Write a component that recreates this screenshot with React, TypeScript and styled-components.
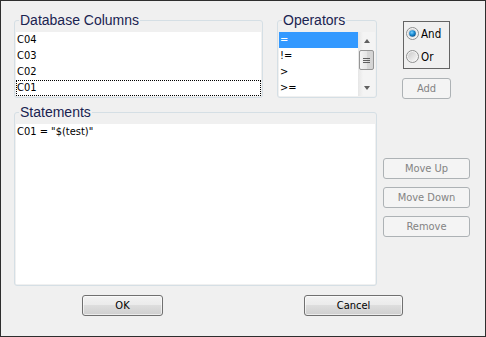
import styled, { createGlobalStyle } from "styled-components";

const GlobalStyle = createGlobalStyle`
  html, body {
    margin: 0;
    padding: 0;
    background: #f0f0f0;
  }
  #root {
    width: 486px;
    height: 337px;
  }
`;

const Window = styled.div`
  box-sizing: border-box;
  width: 486px;
  height: 337px;
  border: 1px solid #2e2e2e;
  background: #f0f0f0;
  padding: 11px 0 0 13px;
  display: flex;
  flex-direction: column;
  font-family: "DejaVu Sans Condensed", "Liberation Sans", sans-serif;
  font-size: 11px;
  color: #000;
`;

const TopArea = styled.div`
  display: flex;
  gap: 6px;
`;

const MainColumn = styled.div`
  width: 363px;
  display: flex;
  flex-direction: column;
`;

const TopRow = styled.div`
  display: flex;
  gap: 14px;
`;

const GroupBox = styled.fieldset<{ $width: number }>`
  box-sizing: border-box;
  width: ${(p) => p.$width}px;
  margin: 0;
  padding: 4px 1px 1px 1px;
  border: 1px solid #d5dfe5;
  border-radius: 3px;
  min-width: 0;
  display: flex;
`;

const GroupTitle = styled.legend`
  font-family: "Liberation Sans", Arial, sans-serif;
  font-size: 14px;
  line-height: 16px;
  color: #1a2350;
  margin-left: 3px;
  padding: 0 1px;
`;

const ListBox = styled.div<{ $height: number }>`
  flex: 1;
  height: ${(p) => p.$height}px;
  background: #ffffff;
  overflow: hidden;
`;

const ListRow = styled.div<{ $selected?: boolean; $focused?: boolean }>`
  box-sizing: border-box;
  height: 16px;
  line-height: 16px;
  padding-left: 1px;
  white-space: pre;
  background: ${(p) => (p.$selected ? "#3399ff" : "transparent")};
  color: ${(p) => (p.$selected ? "#ffffff" : "#000000")};
  outline: ${(p) => (p.$focused ? "1px dotted #000" : "none")};
  outline-offset: -1px;
`;

const ScrollBar = styled.div`
  width: 17px;
  height: 64px;
  background: linear-gradient(to right, #e6e6e6, #f4f4f4 30%, #f4f4f4);
  display: flex;
  flex-direction: column;
  align-items: center;
`;

const Arrow = styled.div<{ $down?: boolean }>`
  height: 17px;
  width: 17px;
  display: flex;
  align-items: center;
  justify-content: center;

  &::before {
    content: "";
    width: 0;
    height: 0;
    border-left: 3.5px solid transparent;
    border-right: 3.5px solid transparent;
    ${(p) =>
      p.$down
        ? "border-top: 4px solid #606060;"
        : "border-bottom: 4px solid #606060;"}
  }
`;

const Thumb = styled.div`
  box-sizing: border-box;
  margin-top: 1px;
  width: 15px;
  height: 20px;
  border: 1px solid #959595;
  border-radius: 2px;
  background: linear-gradient(to right, #f4f4f4, #e6e6e6 50%, #d8d8d8 51%, #d4d4d4);
  display: flex;
  align-items: center;
  justify-content: center;
`;

const Grip = styled.div`
  width: 7px;
  height: 5px;
  background: repeating-linear-gradient(
    to bottom,
    #5f5f5f 0 1px,
    transparent 1px 2px
  );
`;

const ScrollSpacer = styled.div`
  flex: 1;
`;

const StatementsBox = styled(GroupBox)`
  margin-top: 6px;
`;

const SideColumn = styled.div`
  width: 87px;
  display: flex;
  flex-direction: column;
  align-items: center;
`;

const RadioBox = styled.div`
  box-sizing: border-box;
  margin-top: 9px;
  width: 47px;
  height: 48px;
  border: 1px solid #646464;
  display: flex;
  flex-direction: column;
`;

const RadioRow = styled.label`
  height: 23px;
  display: flex;
  align-items: center;
  gap: 2px;
  padding-left: 2px;
  font-size: 11.5px;
`;

const Button = styled.button<{ $width: number }>`
  box-sizing: border-box;
  width: ${(p) => p.$width}px;
  height: 21px;
  padding: 0;
  border: 1px solid #707070;
  border-radius: 3px;
  background: linear-gradient(
    to bottom,
    #f2f2f2 0%,
    #ebebeb 45%,
    #dddddd 50%,
    #cfcfcf 100%
  );
  box-shadow: inset 0 0 0 1px rgba(255, 255, 255, 0.6);
  font-family: "DejaVu Sans Condensed", "Liberation Sans", sans-serif;
  font-size: 11px;
  color: #000;

  &:disabled {
    border-color: #adb2b5;
    background: #f4f4f4;
    box-shadow: none;
    color: #838383;
  }
`;

const AddButton = styled(Button)`
  margin-top: 9px;
`;

const MoveButtons = styled.div`
  margin-top: 59px;
  display: flex;
  flex-direction: column;
  gap: 8px;
`;

const ButtonRow = styled.div`
  margin-top: 9px;
  padding-left: 68px;
  display: flex;
  gap: 141px;
`;

const Radio = ({ checked, id }: { checked?: boolean; id: string }) => (
  <svg width="13" height="13" viewBox="0 0 13 13">
    <defs>
      <linearGradient id={`${id}-bg`} x1="0" y1="0" x2="1" y2="1">
        <stop offset="0" stopColor="#cbcbcb" />
        <stop offset="1" stopColor="#f7f7f7" />
      </linearGradient>
      <radialGradient id={`${id}-dot`} cx="0.4" cy="0.35" r="0.7">
        <stop offset="0" stopColor="#7fd0ff" />
        <stop offset="0.5" stopColor="#1c8fd6" />
        <stop offset="1" stopColor="#0a4d86" />
      </radialGradient>
    </defs>
    <circle cx="6.5" cy="6.5" r="6" fill="#f4f4f4" stroke="#8e8f8f" />
    <circle cx="6.5" cy="6.5" r="4.5" fill={`url(#${id}-bg)`} />
    {checked && <circle cx="6.5" cy="6.5" r="3.3" fill={`url(#${id}-dot)`} />}
  </svg>
);

const columns = ["C04", "C03", "C02", "C01"];
const operators = ["=", "!=", ">", ">="];

export default function App() {
  return (
    <>
      <GlobalStyle />
      <Window>
        <TopArea>
          <MainColumn>
            <TopRow>
              <GroupBox $width={249}>
                <GroupTitle>Database Columns</GroupTitle>
                <ListBox $height={64}>
                  {columns.map((c, i) => (
                    <ListRow key={c} $focused={i === columns.length - 1}>
                      {c}
                    </ListRow>
                  ))}
                </ListBox>
              </GroupBox>
              <GroupBox $width={100}>
                <GroupTitle>Operators</GroupTitle>
                <ListBox $height={64}>
                  {operators.map((o, i) => (
                    <ListRow key={o} $selected={i === 0}>
                      {o}
                    </ListRow>
                  ))}
                </ListBox>
                <ScrollBar>
                  <Arrow />
                  <Thumb>
                    <Grip />
                  </Thumb>
                  <ScrollSpacer />
                  <Arrow $down />
                </ScrollBar>
              </GroupBox>
            </TopRow>
            <StatementsBox $width={363}>
              <GroupTitle>Statements</GroupTitle>
              <ListBox $height={160}>
                <ListRow>C01 = "$(test)"</ListRow>
              </ListBox>
            </StatementsBox>
          </MainColumn>
          <SideColumn>
            <RadioBox>
              <RadioRow>
                <Radio checked id="and" />
                And
              </RadioRow>
              <RadioRow>
                <Radio id="or" />
                Or
              </RadioRow>
            </RadioBox>
            <AddButton $width={49} disabled>
              Add
            </AddButton>
            <MoveButtons>
              <Button $width={87} disabled>
                Move Up
              </Button>
              <Button $width={87} disabled>
                Move Down
              </Button>
              <Button $width={87} disabled>
                Remove
              </Button>
            </MoveButtons>
          </SideColumn>
        </TopArea>
        <ButtonRow>
          <Button $width={81}>OK</Button>
          <Button $width={99}>Cancel</Button>
        </ButtonRow>
      </Window>
    </>
  );
}
